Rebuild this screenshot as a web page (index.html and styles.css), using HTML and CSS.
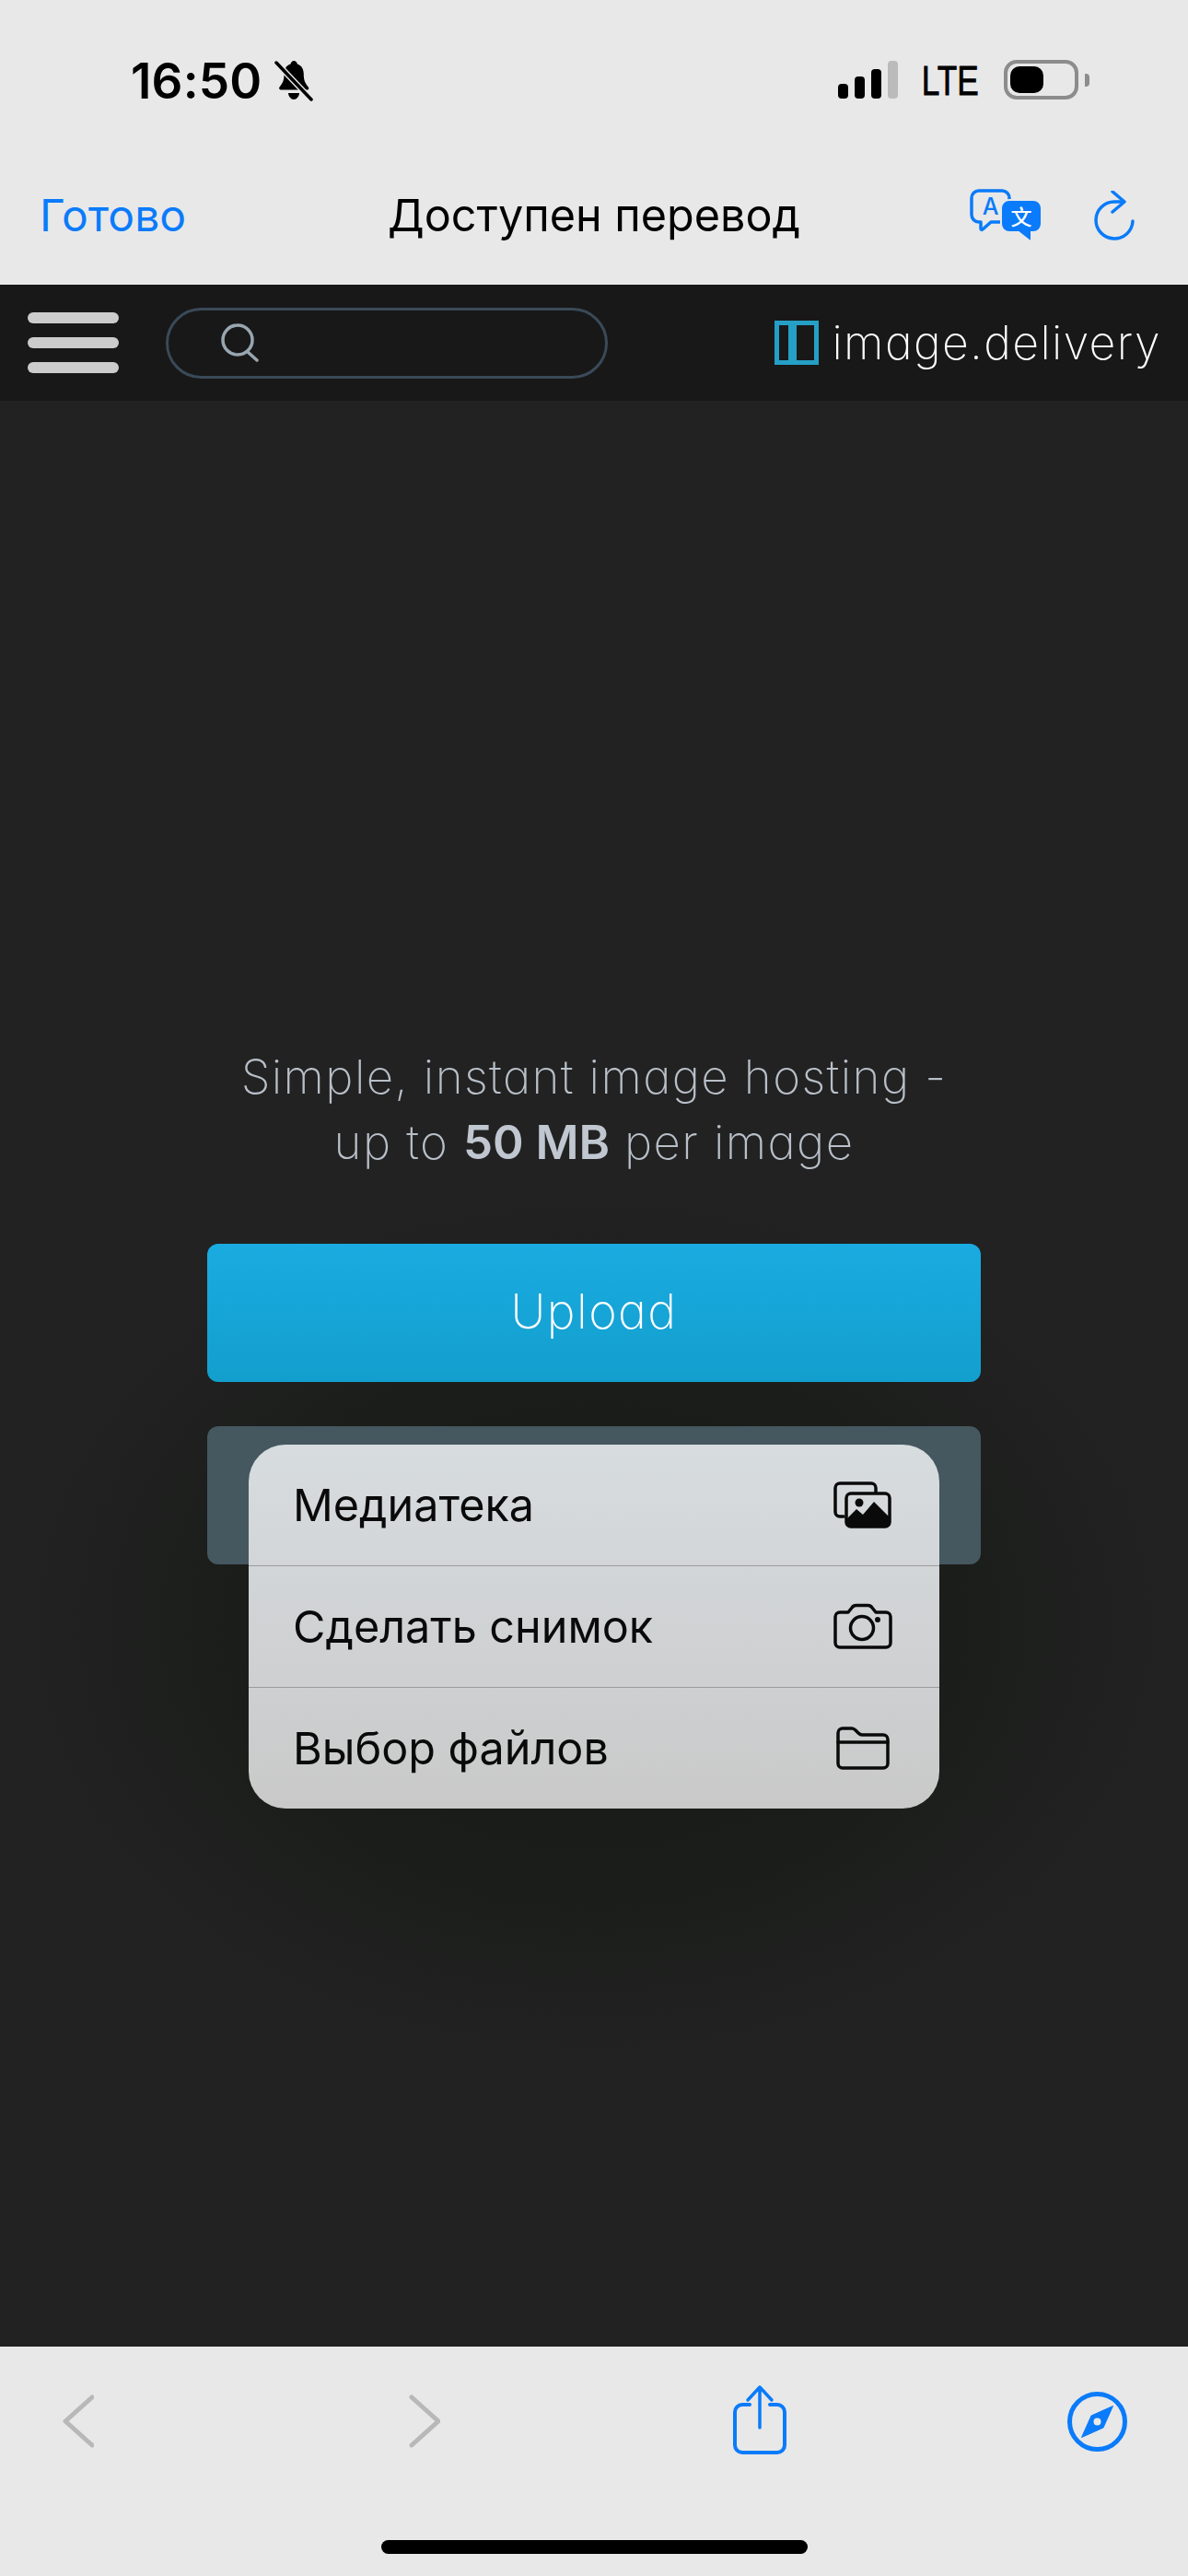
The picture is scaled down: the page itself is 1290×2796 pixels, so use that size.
FILE: index.html
```html
<!DOCTYPE html>
<html lang="ru">
<head>
    <meta charset="UTF-8">
    <meta name="viewport" content="width=device-width, initial-scale=1.0">
    <title>image.delivery</title>
    <link rel="stylesheet" href="styles.css">
</head>
<body>
    <div class="page">
        <!-- Browser chrome, top -->
        <div class="status">
            <div class="status-left">
                <span class="time">16:50</span>
                <svg class="bell" viewBox="0 0 42 45">
                    <path d="M21 1c2 0 3.500 1.500 3.800 3.500 5 1.500 7 6 7 11 0 6 1 9 5 14 1 1.500.5 3-1 3H7c-1.500 0-2.500-1.500-1.500-3 4-5 5-8 5-14 0-5 2-9.500 7-11C18 2.500 19.500 1 21 1z" fill="#000"/>
                    <path d="M15 36h12c0 3.500-3 7-6 7s-6-3.500-6-7z" fill="#000"/>
                    <path d="M2 3l38 40" stroke="#e8e8e8" stroke-width="6.500" fill="none"/>
                    <path d="M2 3l38 40" stroke="#000" stroke-width="3.500" stroke-linecap="round" fill="none"/>
                </svg>
            </div>
            <div class="status-right">
                <div class="signal">
                    <span class="bar bar-1"></span>
                    <span class="bar bar-2"></span>
                    <span class="bar bar-3"></span>
                    <span class="bar bar-4"></span>
                </div>
                <span class="lte">LTE</span>
                <div class="battery">
                    <div class="battery-body"><div class="battery-level"></div></div>
                    <div class="battery-tip"></div>
                </div>
            </div>
        </div>
        <div class="toolbar">
            <span class="done">Готово</span>
            <span class="toolbar-title">Доступен перевод</span>
            <div class="toolbar-icons">
                <svg class="translate-icon" viewBox="0 0 78 58">
                    <path d="M10 2h25a8 8 0 0 1 8 8v18a8 8 0 0 1-8 8H23l-9 8c-1 .800-2 .300-2-1v-7h-2a8 8 0 0 1-8-8V10a8 8 0 0 1 8-8z" class="line" stroke-width="3.500"/>
                    <text x="22.500" y="28" class="translate-a">A</text>
                    <path d="M43 12h26a9 9 0 0 1 9 9v17a9 9 0 0 1-9 9h-2v8c0 1.500-1.500 2-2.500 1L53 47H43a9 9 0 0 1-9-9V21a9 9 0 0 1 9-9z" fill="#0a7bfa" stroke="#e8e8e8" stroke-width="2"/>
                    <text x="56" y="39" class="translate-b">文</text>
                </svg>
                <svg class="reload-icon" viewBox="0 0 44 54">
                    <path d="M42 33a20 20 0 1 1-20-21h9" class="line" stroke-width="3.500"/>
                    <path d="M20 1l13 11-13 11" class="line" stroke-width="3.500"/>
                </svg>
            </div>
        </div>

        <!-- Site header -->
        <header class="site-nav">
            <div class="burger">
                <span></span>
                <span></span>
                <span></span>
            </div>
            <div class="search">
                <svg class="search-icon" viewBox="0 0 42 42">
                    <circle cx="18" cy="18" r="16" fill="none" stroke="#98a6b0" stroke-width="3.500"/>
                    <path d="M29 31l10 9" fill="none" stroke="#98a6b0" stroke-width="3.500" stroke-linecap="round"/>
                </svg>
            </div>
            <div class="brand">
                <div class="brand-mark"><span></span></div>
                <span class="brand-name">image.delivery</span>
            </div>
        </header>

        <!-- Page body -->
        <main class="content">
            <p class="tagline">Simple, instant image hosting -<br>up to <strong>50 MB</strong> per image</p>
            <div class="btn btn-upload">Upload</div>
            <div class="btn btn-muted">
                <div class="menu">
                    <div class="menu-row">
                        <span>Медиатека</span>
                        <svg class="menu-icon" viewBox="0 0 64 52">
                            <path d="M11 38H7a5 5 0 0 1-5-5V7a5 5 0 0 1 5-5h34a5 5 0 0 1 5 5v4" class="dark-line"/>
                            <rect x="14" y="13" width="47" height="36" rx="5" class="dark-line"/>
                            <path d="M14 41l11-11 7 6 12-14 17 17v5a5 5 0 0 1-5 5H19a5 5 0 0 1-5-5z" fill="#0a0a0a"/>
                            <circle cx="28" cy="23" r="4.500" fill="#0a0a0a"/>
                        </svg>
                    </div>
                    <div class="menu-row">
                        <span>Сделать снимок</span>
                        <svg class="menu-icon" viewBox="0 0 64 52">
                            <path d="M7 10h9l4-5c1-1.500 2.500-2.500 4.500-2.500h13c2 0 3.500 1 4.500 2.500l4 5h11a5 5 0 0 1 5 5v28a5 5 0 0 1-5 5H7a5 5 0 0 1-5-5V15a5 5 0 0 1 5-5z" class="dark-line"/>
                            <circle cx="31" cy="27" r="12.500" class="dark-line"/>
                            <circle cx="48" cy="18" r="3" fill="#0a0a0a"/>
                        </svg>
                    </div>
                    <div class="menu-row">
                        <span>Выбор файлов</span>
                        <svg class="menu-icon" viewBox="0 0 64 52">
                            <path d="M11 4h9c2 0 3 1 4 2l3 3c1 1 2 2 4 2h23a5 5 0 0 1 5 5v26a5 5 0 0 1-5 5H10a5 5 0 0 1-5-5V9a5 5 0 0 1 5-5z" class="dark-line"/>
                            <path d="M5 19h54" class="dark-line"/>
                        </svg>
                    </div>
                </div>
            </div>
        </main>

        <!-- Browser chrome, bottom -->
        <div class="bottom-bar">
            <div class="bottom-icons">
                <svg class="chevron" viewBox="0 0 34 58">
                    <path d="M32 3L3 29l29 26" fill="none" stroke="#b8b8b8" stroke-width="5" stroke-linecap="round" stroke-linejoin="round"/>
                </svg>
                <svg class="chevron chevron-next" viewBox="0 0 34 58">
                    <path d="M3 3l29 26L3 55" fill="none" stroke="#b8b8b8" stroke-width="5" stroke-linecap="round" stroke-linejoin="round"/>
                </svg>
                <svg class="share-icon" viewBox="0 0 58 76">
                    <path d="M18 22H10a8 8 0 0 0-8 8v36a8 8 0 0 0 8 8h38a8 8 0 0 0 8-8V30a8 8 0 0 0-8-8h-8" class="line" stroke-width="4"/>
                    <path d="M29 3v44M16 17L29 3l13 14" class="line" stroke-width="3.500"/>
                </svg>
                <svg class="compass-icon" viewBox="0 0 65 65">
                    <circle cx="32.500" cy="32.500" r="30" class="line" stroke-width="5"/>
                    <path d="M49.500 15.500L39 39 15.500 49.500 26 26z" fill="#0a7bfa" stroke="#0a7bfa" stroke-width="1" stroke-linejoin="round"/>
                    <circle cx="32.500" cy="32.500" r="4" fill="#e8e8e8"/>
                </svg>
            </div>
            <div class="home-bar"></div>
        </div>
    </div>
</body>
</html>
```

FILE: styles.css
```css
:root {
    --chrome: #e8e8e8;
    --blue: #0a7bfa;
    --sf: Inter, Roboto, "Liberation Sans", sans-serif;
    --round: Inter, Lato, sans-serif;
}
* {
    box-sizing: border-box;
}
body {
    margin: 0;
    font-family: var(--sf);
    background: #222;
}
.page {
    width: 1290px;
    height: 2796px;
    display: flex;
    flex-direction: column;
    overflow: hidden;
}
.line {
    fill: none;
    stroke: var(--blue);
    stroke-linecap: round;
    stroke-linejoin: round;
}
.dark-line {
    fill: none;
    stroke: #0a0a0a;
    stroke-width: 3.5;
    stroke-linecap: round;
    stroke-linejoin: round;
}

/* status bar */
.status {
    height: 175px;
    background: var(--chrome);
    display: flex;
    justify-content: space-between;
    padding: 65px 107px 0 142px;
}
.status-left {
    display: flex;
    gap: 13px;
    height: 45px;
    align-items: center;
}
.time {
    font-size: 53px;
    font-weight: 600;
    letter-spacing: 0.2px;
    color: #000;
}
.bell {
    width: 42px;
    height: 45px;
}
.status-right {
    display: flex;
    height: 43px;
    align-items: flex-end;
}
.signal {
    display: flex;
    align-items: flex-end;
    gap: 7px;
    height: 41px;
    margin-bottom: 1px;
}
.bar {
    width: 11px;
    background: #000;
    border-radius: 4px;
}
.bar-1 { height: 16px; }
.bar-2 { height: 24px; }
.bar-3 { height: 32px; }
.bar-4 { height: 41px; background: #bbb; }
.lte {
    display: inline-block;
    font-family: "Liberation Sans", sans-serif;
    font-size: 44px;
    line-height: 40px;
    color: #000;
    margin: 0 20px 0 18px;
    transform: scaleX(0.8);
    -webkit-text-stroke: 0.8px #000;
}
.battery {
    display: flex;
    align-items: center;
    gap: 7px;
}
.battery-body {
    width: 81px;
    height: 43px;
    border: 4px solid #8c8c8c;
    border-radius: 14px;
    padding: 3px;
}
.battery-level {
    width: 36px;
    height: 100%;
    background: #000;
    border-radius: 10px;
}
.battery-tip {
    width: 5px;
    height: 14px;
    background: #8c8c8c;
    border-radius: 0 4px 4px 0;
}

/* translate toolbar */
.toolbar {
    height: 134px;
    background: var(--chrome);
    display: grid;
    grid-template-columns: 1fr auto 1fr;
    align-items: center;
    padding: 0 43px 17px;
}
.done {
    font-size: 48px;
    color: var(--blue);
}
.toolbar-title {
    font-size: 48.500px;
    color: #000;
}
.toolbar-icons {
    justify-self: end;
    display: flex;
    align-items: center;
    gap: 57px;
    margin-right: 15px;
}
.translate-icon {
    width: 78px;
    height: 58px;
}
.reload-icon {
    width: 44px;
    height: 54px;
}
.translate-a {
    font-family: Inter, sans-serif;
    font-size: 25px;
    font-weight: 500;
    fill: var(--blue);
    text-anchor: middle;
}
.translate-b {
    font-family: "Noto Sans CJK SC", sans-serif;
    font-size: 23px;
    font-weight: 500;
    fill: #fff;
    text-anchor: middle;
}

/* site nav */
.site-nav {
    height: 126px;
    background: #181818;
    display: flex;
    align-items: center;
    padding: 0 29px 0 30px;
}
.burger {
    width: 99px;
    display: flex;
    flex-direction: column;
    gap: 15px;
}
.burger span {
    height: 12px;
    background: #ccc;
    border-radius: 6px;
}
.search {
    width: 480px;
    height: 77px;
    margin-left: 51px;
    border: 3px solid #3a4a58;
    border-radius: 39px;
    display: flex;
    align-items: center;
    padding-left: 57px;
}
.search-icon {
    width: 42px;
    height: 42px;
}
.brand {
    margin-left: auto;
    display: flex;
    align-items: center;
    gap: 14px;
}
.brand-mark {
    width: 48px;
    height: 48px;
    border: 5px solid #259fc5;
    padding-left: 10px;
}
.brand-mark span {
    display: block;
    width: 9px;
    height: 100%;
    background: #259fc5;
}
.brand-name {
    font-family: var(--round);
    font-feature-settings: "cv11";
    font-size: 50px;
    font-weight: 250;
    letter-spacing: 1.4px;
    color: #fff;
}

/* main */
.content {
    flex: 1;
    display: flex;
    flex-direction: column;
    align-items: center;
    padding-top: 698px;
    background: radial-gradient(ellipse 650px 490px at 645px 1330px, #191c19 48%, #222 100%);
}
.tagline {
    margin: 0 0 75px;
    font-family: var(--round);
    font-feature-settings: "cv11";
    font-size: 51px;
    font-weight: 250;
    letter-spacing: 1.4px;
    line-height: 71px;
    color: #b8bfc8;
    text-align: center;
}
.tagline strong {
    font-weight: 600;
    letter-spacing: 0;
    color: #c0c7d0;
}
.btn {
    width: 840px;
    height: 150px;
    flex: none;
    border-radius: 12px;
}
.btn-upload {
    background: linear-gradient(#1aabe0, #139fce);
    color: #fff;
    font-family: var(--round);
    font-feature-settings: "cv11";
    font-size: 52px;
    font-weight: 250;
    letter-spacing: 1.5px;
    padding-bottom: 3px;
    display: flex;
    align-items: center;
    justify-content: center;
}
.btn-muted {
    margin-top: 48px;
    background: #45575f;
    position: relative;
}

/* popup menu */
.menu {
    position: absolute;
    top: 20px;
    left: 45px;
    right: 45px;
    background: linear-gradient(#d7dcdf, #c9c9c9);
    border-radius: 40px;
}
.menu-row {
    height: 132px;
    display: flex;
    align-items: center;
    justify-content: space-between;
    padding: 0 51px 0 48px;
    font-size: 48.500px;
    color: #0a0a0a;
}
.menu-row:first-child {
    height: 131px;
}
.menu-row + .menu-row {
    border-top: 1px solid #9a9c9e;
}
.menu-icon {
    width: 64px;
    height: 52px;
}

/* bottom toolbar */
.bottom-bar {
    height: 249px;
    background: var(--chrome);
    display: flex;
    flex-direction: column;
}
.bottom-icons {
    display: flex;
    align-items: center;
    padding: 41px 0 0 68px;
}
.chevron {
    width: 34px;
    height: 58px;
    margin-top: 3px;
}
.chevron-next {
    margin-left: 342px;
}
.share-icon {
    width: 58px;
    height: 76px;
    margin-left: 318px;
}
.compass-icon {
    width: 65px;
    height: 65px;
    margin-left: 305px;
    margin-top: 4px;
}
.home-bar {
    width: 463px;
    height: 15px;
    margin: auto auto 24px;
    background: #000;
    border-radius: 8px;
}
```
